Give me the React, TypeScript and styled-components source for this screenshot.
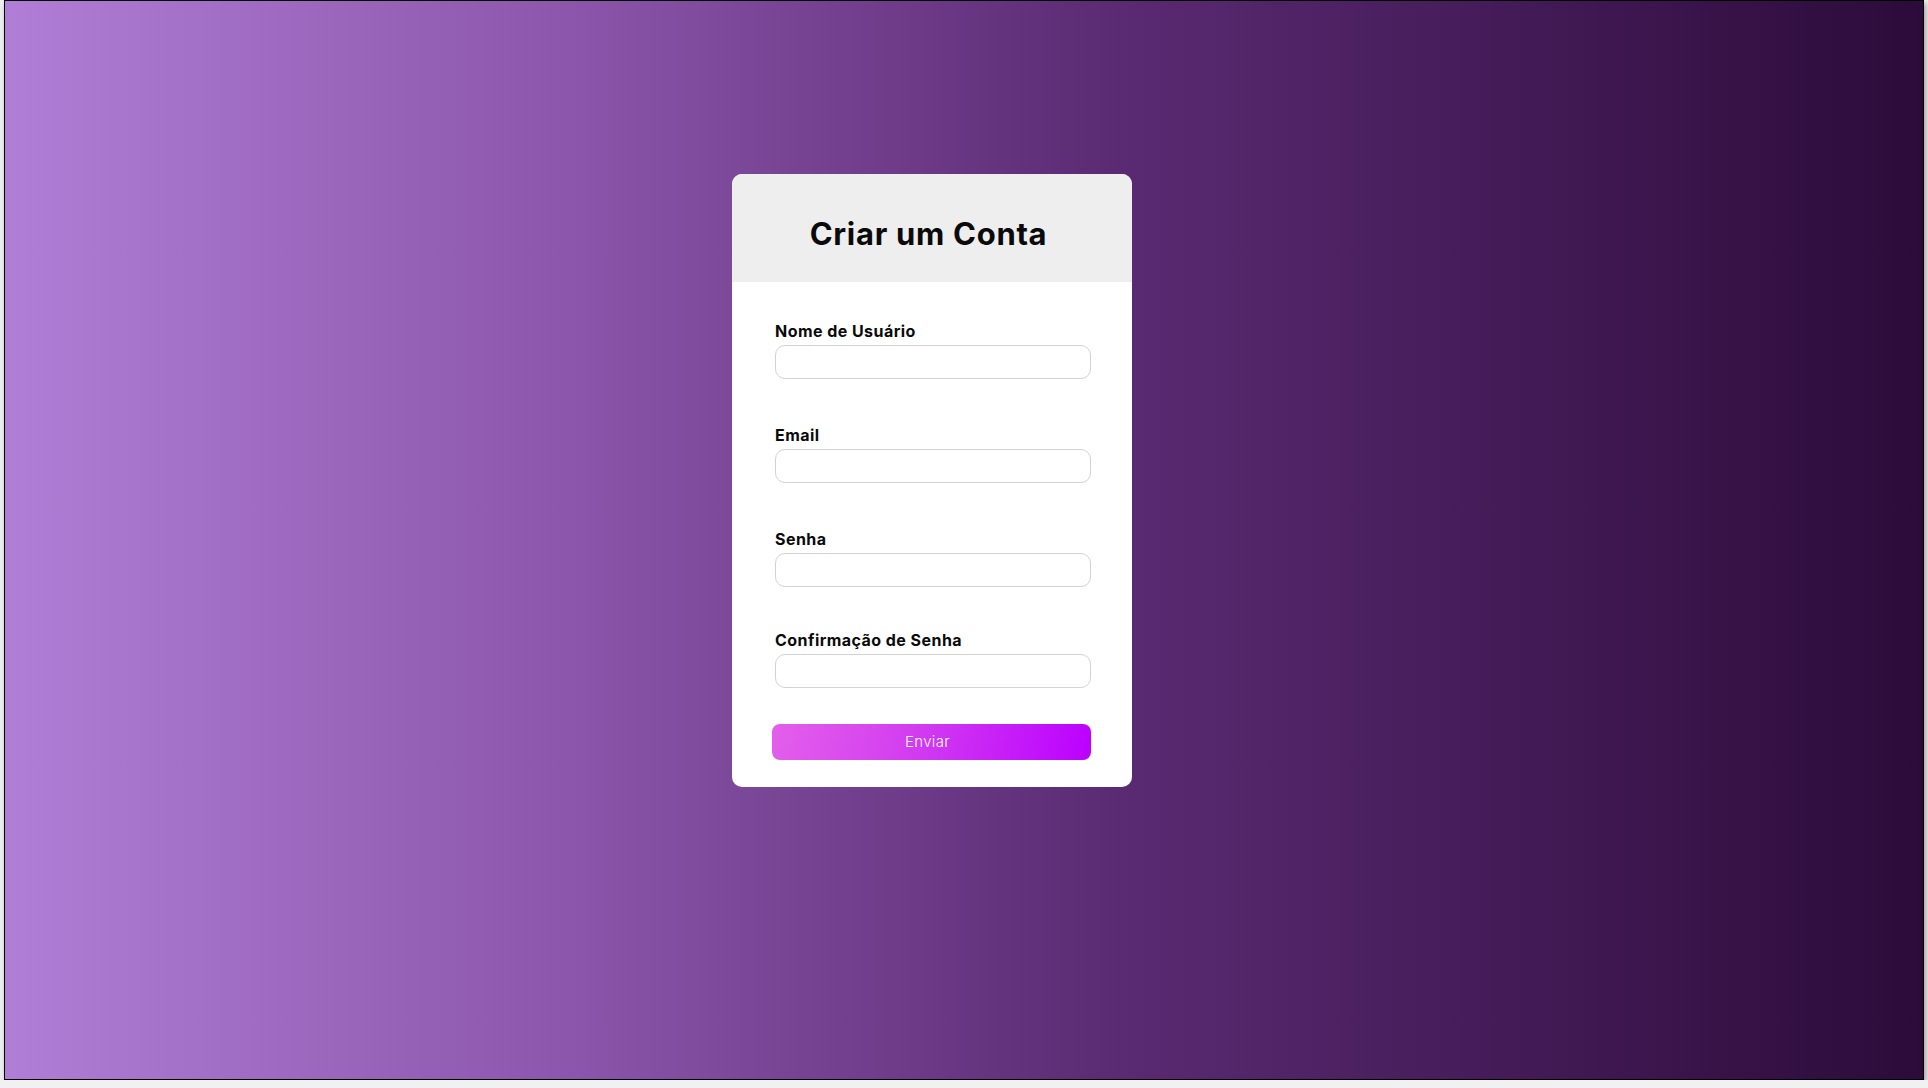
import React from "react";
import styled, { createGlobalStyle } from "styled-components";

const GlobalStyle = createGlobalStyle`
  html, body {
    margin: 0;
    padding: 0;
    background: #f1f1f1;
    font-family: "Inter", "Noto Sans", sans-serif;
  }
  * { box-sizing: border-box; }
`;

const Frame = styled.div`
  margin-left: 4px;
  width: 1920px;
  height: 1080px;
  border: 1px solid #000;
  box-shadow: 2px 3px 6px rgba(0, 0, 0, 0.35);
  background: linear-gradient(to right, #b07ed6 0%, #8a55aa 30%, #5a2a72 58%, #2c0b3a 100%);
  display: flex;
  justify-content: center;
  align-items: flex-start;
  padding: 173px 64px 0 0;
`;

const Card = styled.div`
  width: 400px;
  background: #fff;
  border-radius: 10px;
  overflow: hidden;
  display: flex;
  flex-direction: column;
`;

const Header = styled.div`
  height: 108px;
  background: #eeeeee;
  display: flex;
  align-items: center;
  justify-content: center;
  padding: 10px 7px 0 0;
`;

const Title = styled.h1`
  margin: 0;
  font-family: "Inter", "Noto Sans", sans-serif;
  font-weight: 700;
  font-size: 31px;
  letter-spacing: 0.7px;
  color: #0a0a0a;
`;

const Form = styled.form`
  display: flex;
  flex-direction: column;
  padding: 37px 41px 27px 43px;
`;

const Field = styled.div<{ $after: number }>`
  display: flex;
  flex-direction: column;
  gap: 2px;
  margin-bottom: ${(p) => p.$after}px;
`;

const Label = styled.label`
  font-family: "Inter", "Noto Sans", sans-serif;
  font-weight: 700;
  font-size: 16px;
  letter-spacing: 0.45px;
  line-height: 24px;
  color: #0a0a0a;
`;

const Input = styled.input`
  width: 316px;
  height: 34px;
  border: 1px solid #d2d2d2;
  border-radius: 10px;
  background: #fff;
  outline: none;
  padding: 0 10px;
  font-size: 14px;
`;

const Button = styled.button`
  margin-left: -3px;
  width: 319px;
  height: 36px;
  border: none;
  border-radius: 8px;
  padding: 0 8px 2px 0;
  background: linear-gradient(100deg, #e35fea 0%, #d23cf0 45%, #bb00ff 100%);
  color: #fff;
  font-family: "Inter", "Noto Sans", sans-serif;
  font-weight: 300;
  font-size: 15px;
  letter-spacing: 0.3px;
  cursor: pointer;
`;

const fields = [
  { id: "user", label: "Nome de Usuário", type: "text", after: 44 },
  { id: "email", label: "Email", type: "email", after: 44 },
  { id: "pass", label: "Senha", type: "password", after: 41 },
  { id: "confirm", label: "Confirmação de Senha", type: "password", after: 36 },
];

export default function App() {
  return (
    <>
      <GlobalStyle />
      <Frame>
        <Card>
          <Header>
            <Title>Criar um Conta</Title>
          </Header>
          <Form onSubmit={(e) => e.preventDefault()}>
            {fields.map((f) => (
              <Field key={f.id} $after={f.after}>
                <Label htmlFor={f.id}>{f.label}</Label>
                <Input id={f.id} type={f.type} />
              </Field>
            ))}
            <Button type="submit">Enviar</Button>
          </Form>
        </Card>
      </Frame>
    </>
  );
}
